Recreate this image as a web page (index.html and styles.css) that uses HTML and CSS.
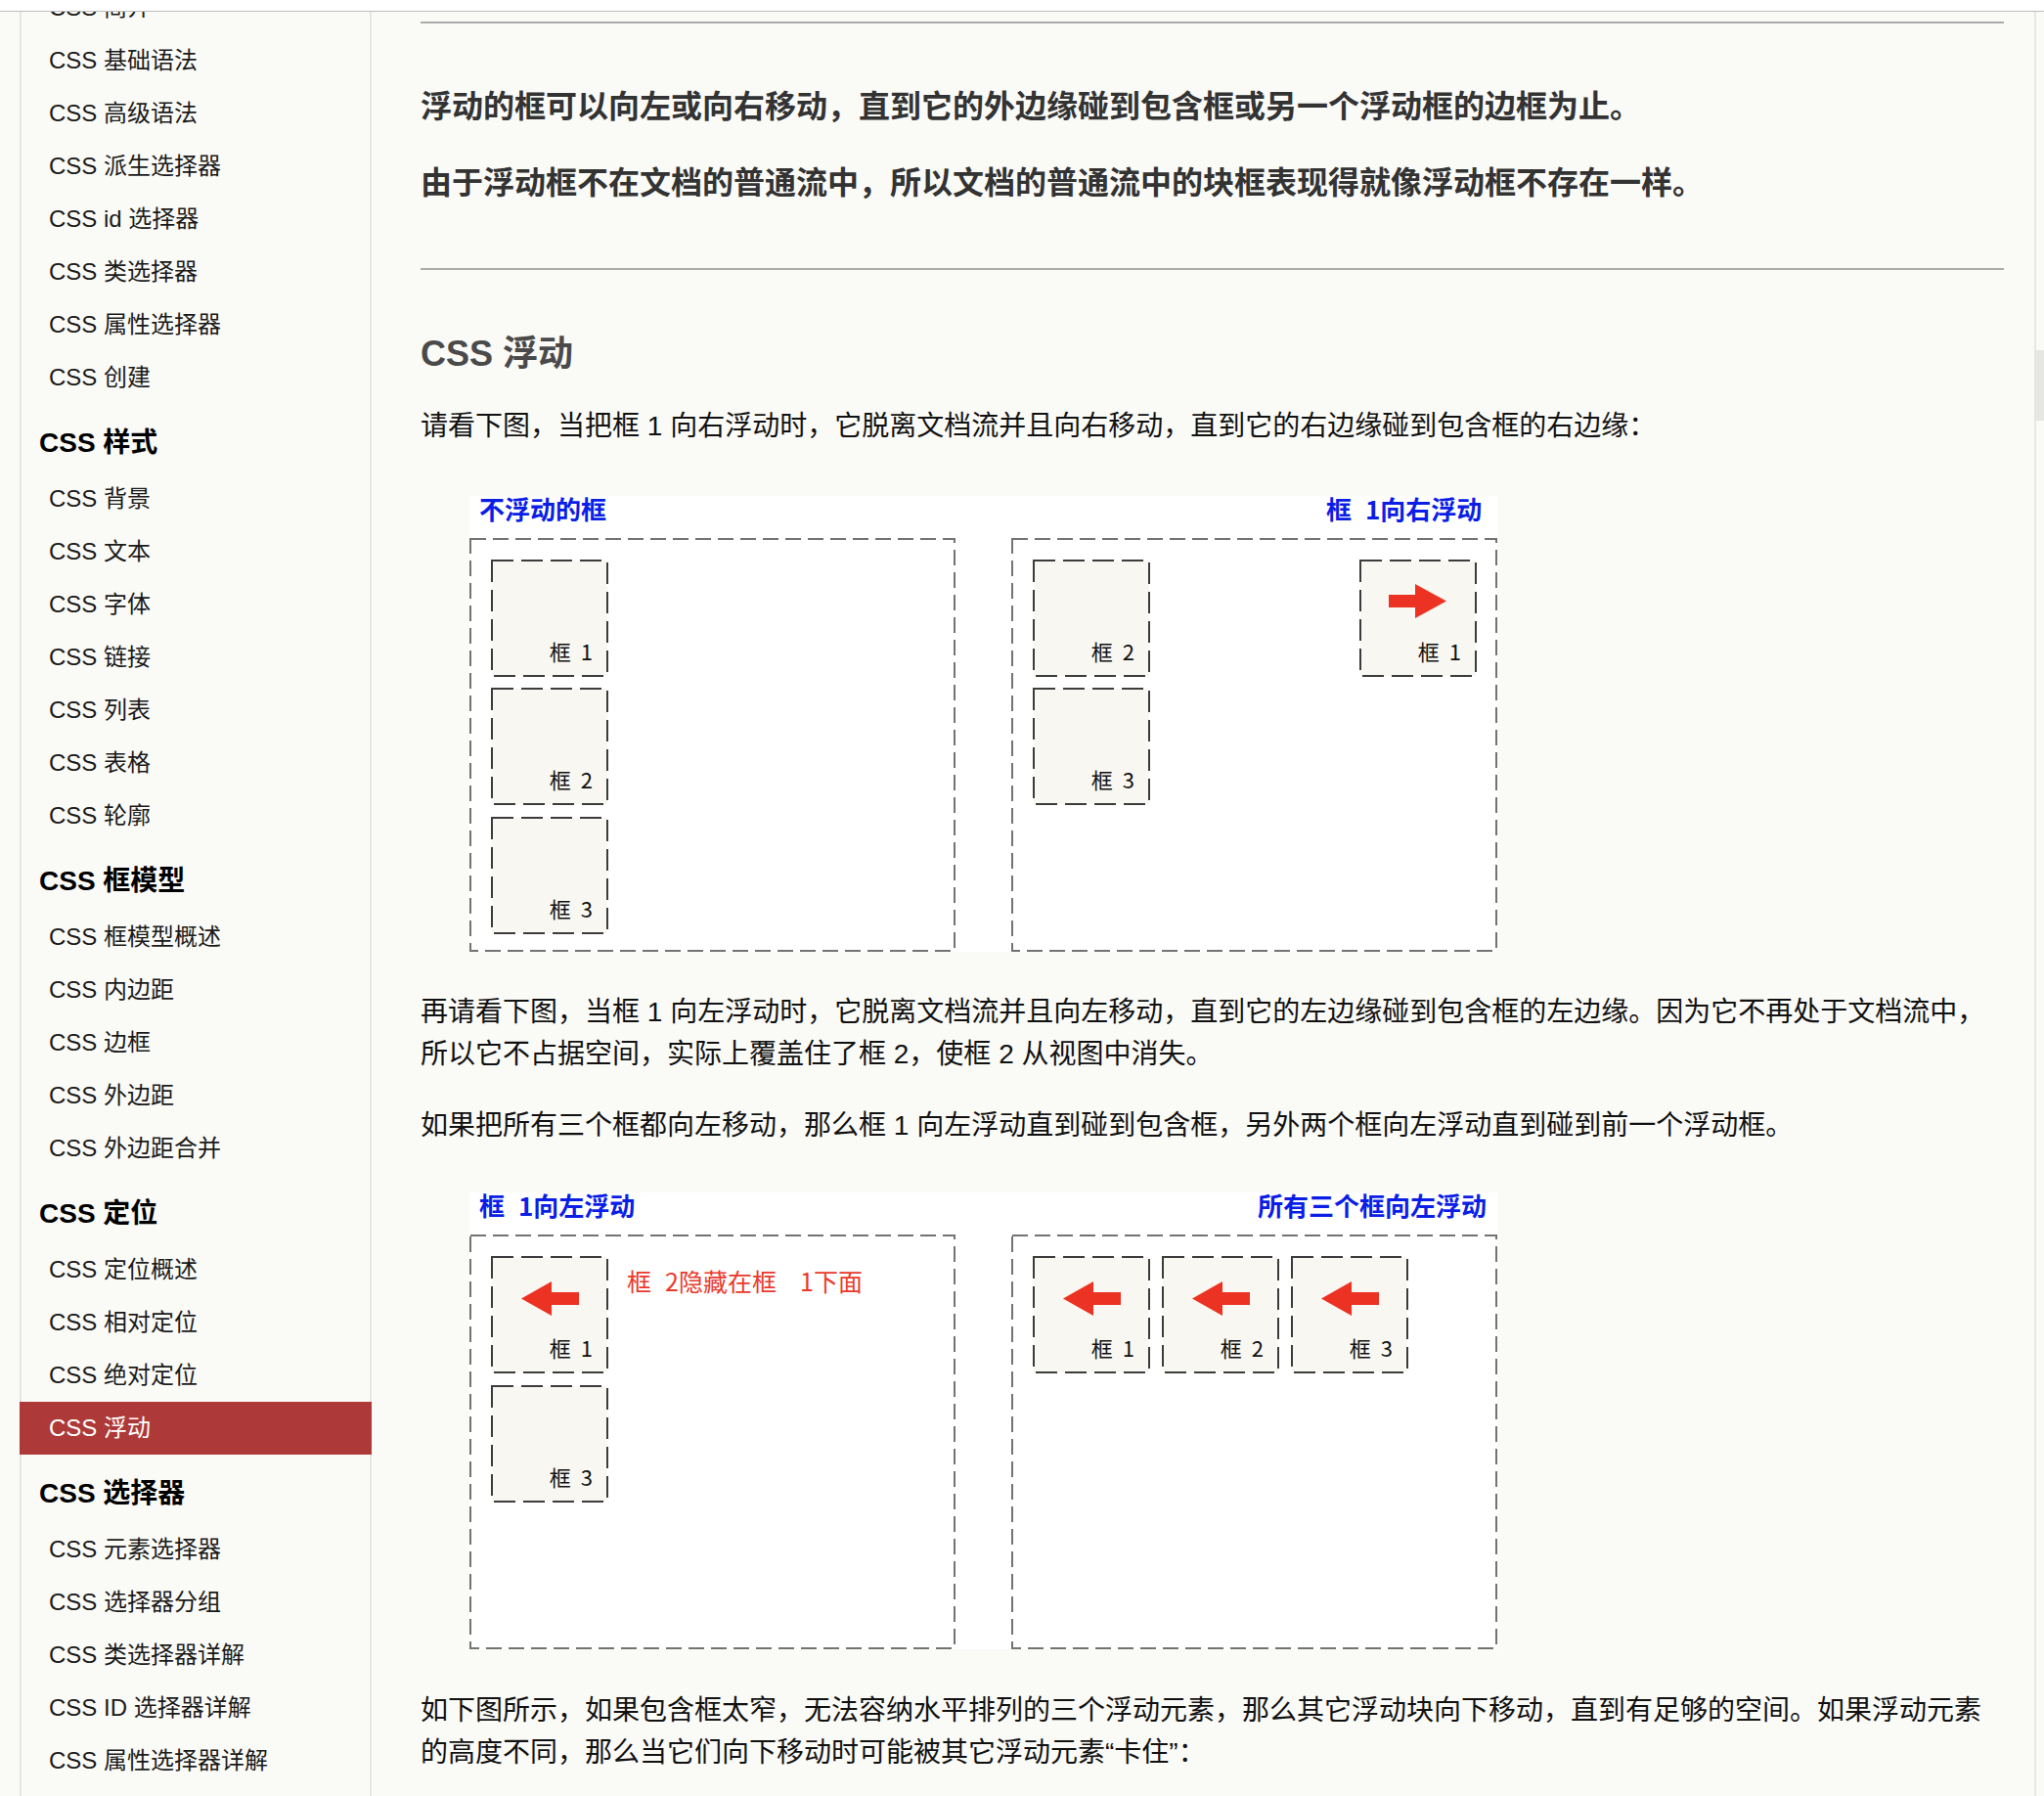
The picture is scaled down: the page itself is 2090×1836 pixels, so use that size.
FILE: index.html
```html
<!DOCTYPE html>
<html lang="zh-CN">
<head>
<meta charset="utf-8">
<title>CSS 浮动</title>
<link rel="stylesheet" href="styles.css">
</head>
<body>
<div class="topbar"></div>
<div class="page">
  <div class="gutter"></div>
  <nav class="sidebar">
    <ul class="navlist">
      <li class="item">CSS 简介</li>
      <li class="item">CSS 基础语法</li>
      <li class="item">CSS 高级语法</li>
      <li class="item">CSS 派生选择器</li>
      <li class="item">CSS id 选择器</li>
      <li class="item">CSS 类选择器</li>
      <li class="item">CSS 属性选择器</li>
      <li class="item">CSS 创建</li>
      <li class="head">CSS 样式</li>
      <li class="item">CSS 背景</li>
      <li class="item">CSS 文本</li>
      <li class="item">CSS 字体</li>
      <li class="item">CSS 链接</li>
      <li class="item">CSS 列表</li>
      <li class="item">CSS 表格</li>
      <li class="item">CSS 轮廓</li>
      <li class="head">CSS 框模型</li>
      <li class="item">CSS 框模型概述</li>
      <li class="item">CSS 内边距</li>
      <li class="item">CSS 边框</li>
      <li class="item">CSS 外边距</li>
      <li class="item">CSS 外边距合并</li>
      <li class="head">CSS 定位</li>
      <li class="item">CSS 定位概述</li>
      <li class="item">CSS 相对定位</li>
      <li class="item">CSS 绝对定位</li>
      <li class="item active">CSS 浮动</li>
      <li class="head">CSS 选择器</li>
      <li class="item">CSS 元素选择器</li>
      <li class="item">CSS 选择器分组</li>
      <li class="item">CSS 类选择器详解</li>
      <li class="item">CSS ID 选择器详解</li>
      <li class="item">CSS 属性选择器详解</li>
    </ul>
  </nav>
  <main class="main">
    <div class="rule"></div>
    <p class="lead">浮动的框可以向左或向右移动，直到它的外边缘碰到包含框或另一个浮动框的边框为止。</p>
    <p class="lead second">由于浮动框不在文档的普通流中，所以文档的普通流中的块框表现得就像浮动框不存在一样。</p>
    <div class="rule rule2"></div>
    <h2 class="title">CSS 浮动</h2>
    <p class="text t1">请看下图，当把框 1 向右浮动时，它脱离文档流并且向右移动，直到它的右边缘碰到包含框的右边缘：</p>
    <div class="figure f1">
      <svg class="diagram" width="1051" height="466" viewBox="0 0 1051 466">
        <rect width="1051" height="466" fill="#ffffff"/>
        <text class="lbl" x="10" y="24">不浮动的框</text>
        <text class="lbl" x="876" y="24">框<tspan x="916">1向右浮动</tspan></text>
        <rect class="outer" x="1" y="44" width="495" height="421"/>
        <rect class="outer" x="555" y="44" width="495" height="421"/>
        <rect class="box" x="23" y="66" width="118" height="118"/>
        <text class="bx" x="126" y="168" text-anchor="end">框<tspan dx="10">1</tspan></text>
        <rect class="box" x="23" y="197" width="118" height="118"/>
        <text class="bx" x="126" y="299" text-anchor="end">框<tspan dx="10">2</tspan></text>
        <rect class="box" x="23" y="329" width="118" height="118"/>
        <text class="bx" x="126" y="431" text-anchor="end">框<tspan dx="10">3</tspan></text>
        <rect class="box" x="577" y="66" width="118" height="118"/>
        <text class="bx" x="680" y="168" text-anchor="end">框<tspan dx="10">2</tspan></text>
        <rect class="box" x="577" y="197" width="118" height="118"/>
        <text class="bx" x="680" y="299" text-anchor="end">框<tspan dx="10">3</tspan></text>
        <rect class="box" x="911" y="66" width="118" height="118"/>
        <polygon class="arrow" points="940,101 967,101 967,90 999,107.5 967,125 967,114 940,114"/>
        <text class="bx" x="1014" y="168" text-anchor="end">框<tspan dx="10">1</tspan></text>
      </svg>
    </div>
    <p class="text t2">再请看下图，当框 1 向左浮动时，它脱离文档流并且向左移动，直到它的左边缘碰到包含框的左边缘。因为它不再处于文档流中，所以它不占据空间，实际上覆盖住了框 2，使框 2 从视图中消失。</p>
    <p class="text t3">如果把所有三个框都向左移动，那么框 1 向左浮动直到碰到包含框，另外两个框向左浮动直到碰到前一个浮动框。</p>
    <div class="figure f2">
      <svg class="diagram" width="1051" height="467" viewBox="0 0 1051 467">
        <rect width="1051" height="467" fill="#ffffff"/>
        <text class="lbl" x="10" y="24">框<tspan x="50">1向左浮动</tspan></text>
        <text class="lbl" x="1040" y="24" text-anchor="end">所有三个框向左浮动</text>
        <rect class="outer" x="1" y="44" width="495" height="422"/>
        <rect class="outer" x="555" y="44" width="495" height="422"/>
        <rect class="box" x="23" y="66" width="118" height="118"/>
        <polygon class="arrow" points="53,108.5 84,91 84,102 112,102 112,115 84,115 84,126"/>
        <text class="bx" x="126" y="168" text-anchor="end">框<tspan dx="10">1</tspan></text>
        <text class="hidden" x="161" y="101">框<tspan x="200">2隐藏在框</tspan><tspan x="338">1下面</tspan></text>
        <rect class="box" x="23" y="198" width="118" height="118"/>
        <text class="bx" x="126" y="300" text-anchor="end">框<tspan dx="10">3</tspan></text>
        <rect class="box" x="577" y="66" width="118" height="118"/>
        <polygon class="arrow" points="607,108.5 638,91 638,102 666,102 666,115 638,115 638,126"/>
        <text class="bx" x="680" y="168" text-anchor="end">框<tspan dx="10">1</tspan></text>
        <rect class="box" x="709" y="66" width="118" height="118"/>
        <polygon class="arrow" points="739,108.5 770,91 770,102 798,102 798,115 770,115 770,126"/>
        <text class="bx" x="812" y="168" text-anchor="end">框<tspan dx="10">2</tspan></text>
        <rect class="box" x="841" y="66" width="118" height="118"/>
        <polygon class="arrow" points="871,108.5 902,91 902,102 930,102 930,115 902,115 902,126"/>
        <text class="bx" x="944" y="168" text-anchor="end">框<tspan dx="10">3</tspan></text>
      </svg>
    </div>
    <p class="text t4">如下图所示，如果包含框太窄，无法容纳水平排列的三个浮动元素，那么其它浮动块向下移动，直到有足够的空间。如果浮动元素的高度不同，那么当它们向下移动时可能被其它浮动元素“卡住”：</p>
  </main>
  <div class="scroller"><div class="thumb"></div></div>
</div>
</body>
</html>
```

FILE: styles.css
```css
html, body {
  margin: 0;
  padding: 0;
}
body {
  width: 2090px;
  height: 1836px;
  overflow: hidden;
  background: #ffffff;
  font-family: "Liberation Sans", "Noto Sans CJK SC", sans-serif;
  color: #111;
}
.topbar {
  height: 11px;
  background: #ffffff;
  border-bottom: 1px solid #bdbdbd;
}
.page {
  display: flex;
  height: 1824px;
  overflow: hidden;
  background: #fafaf7;
}
.gutter {
  width: 20px;
  flex: none;
}
.sidebar {
  width: 356px;
  flex: none;
  border-left: 2px solid #e6e6e2;
  border-right: 2px solid #e6e6e2;
}
.navlist {
  list-style: none;
  margin: -31px 0 0 0;
  padding: 0;
}
.item {
  height: 54px;
  line-height: 54px;
  font-size: 24px;
  padding-left: 28px;
  color: #1a1a1a;
  white-space: nowrap;
}
.item.active {
  background: #ad3a38;
  color: #ffffff;
  margin: 0 -2px;
  padding-left: 30px;
}
.head {
  height: 40px;
  line-height: 40px;
  margin: 20px 0 10px;
  padding-left: 18px;
  font-size: 28px;
  font-weight: bold;
  color: #000;
  white-space: nowrap;
}
.main {
  flex: 1;
  padding: 10px 31px 0 50px;
  border-right: 2px solid #e6e6e2;
  min-width: 0;
}
.scroller {
  width: 8px;
  flex: none;
  background: #fafaf7;
  padding-top: 346px;
}
.thumb {
  height: 72px;
  background: #e6e6e2;
}
.rule {
  height: 2px;
  background: #ababab;
}
.lead {
  margin: 61px 0 0;
  font-size: 32px;
  line-height: 48px;
  font-weight: bold;
  color: #333;
}
.lead.second {
  margin-top: 30px;
}
.rule2 {
  margin-top: 63px;
}
.title {
  margin: 59px 0 0;
  font-size: 36px;
  line-height: 54px;
  font-weight: bold;
  color: #4a4a4a;
}
.text {
  margin: 0;
  font-size: 28px;
  line-height: 43px;
  color: #111;
}
.t1 { margin-top: 25px; }
.t2 { margin-top: 40px; }
.t3 { margin-top: 30px; }
.t4 { margin-top: 41px; }
.figure {
  margin-left: 50px;
  line-height: 0;
}
.f1 { margin-top: 50px; }
.f2 { margin-top: 47px; }
.diagram {
  display: block;
}
.diagram .outer {
  fill: none;
  stroke: #737373;
  stroke-width: 2;
  stroke-dasharray: 16 7;
}
.diagram .box {
  fill: #f8f7f1;
  stroke: #3c3c3c;
  stroke-width: 2;
  stroke-dasharray: 22 8;
}
.diagram .lbl {
  font-family: "Noto Sans CJK SC", sans-serif;
  font-size: 26px;
  font-weight: bold;
  fill: #0a1ee6;
}
.diagram .bx {
  font-family: "Noto Sans CJK SC", sans-serif;
  font-size: 22px;
  fill: #111;
}
.diagram .hidden {
  font-family: "Noto Sans CJK SC", sans-serif;
  font-size: 25px;
  fill: #ea3a2c;
}
.diagram .arrow {
  fill: #ec3323;
}
```
